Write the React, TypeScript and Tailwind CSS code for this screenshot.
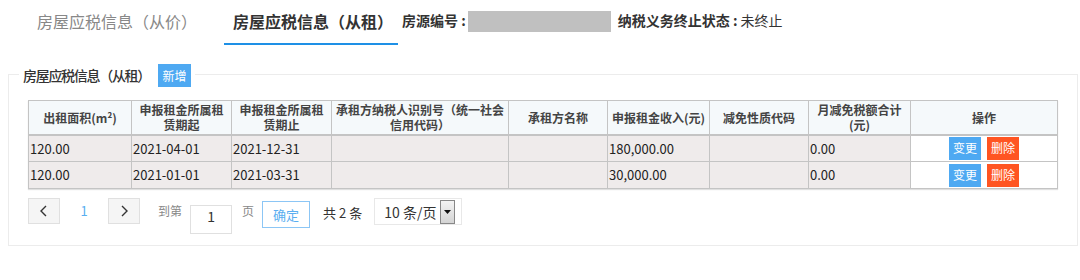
import { useState } from 'react';

const FONT = { fontFamily: '"Noto Sans CJK SC", "Liberation Sans", sans-serif' };

interface RentRow {
  area: string;
  start: string;
  end: string;
  taxId: string;
  name: string;
  income: string;
  code: string;
  relief: string;
}

const rows: RentRow[] = [
  { area: '120.00', start: '2021-04-01', end: '2021-12-31', taxId: '', name: '', income: '180,000.00', code: '', relief: '0.00' },
  { area: '120.00', start: '2021-01-01', end: '2021-03-31', taxId: '', name: '', income: '30,000.00', code: '', relief: '0.00' },
];

const headers: { label: React.ReactNode; w: string }[] = [
  { label: <>出租面积(m²)</>, w: 'w-[103px]' },
  { label: <>申报租金所属租<br />赁期起</>, w: 'w-[100px]' },
  { label: <>申报租金所属租<br />赁期止</>, w: 'w-[100px]' },
  { label: <>承租方纳税人识别号（统一社会<br />信用代码）</>, w: 'w-[177px]' },
  { label: <>承租方名称</>, w: 'w-[99px]' },
  { label: <>申报租金收入(元)</>, w: 'w-[102px]' },
  { label: <>减免性质代码</>, w: 'w-[99px]' },
  { label: <>月减免税额合计<br />(元)</>, w: 'w-[102px]' },
  { label: <>操作</>, w: 'w-[147px]' },
];

export default function App() {
  const [page, setPage] = useState('1');

  return (
    <div className="w-[1080px] h-[280px] bg-white text-[#333] overflow-hidden" style={FONT}>
      {/* ── TABS ── */}
      <div className="flex items-end h-[45px] pl-[37px]">
        <div className="h-[45px] flex items-start pt-[9px] text-[16px] text-[#888] w-[187px]">房屋应税信息（从价）</div>
        <div className="h-[45px] flex flex-col">
          <div className="flex-1 flex items-start pt-[9px] px-[9px] text-[16px] font-bold text-[#333]">房屋应税信息（从租）</div>
          <div className="h-[2px] w-[174px] bg-[#1e90e6]" />
        </div>
        <div className="h-[45px] flex items-start pt-[10px] text-[14px]">
          <span className="font-bold">房源编号 :</span>
          <span className="inline-block w-[143px] h-[21px] bg-[#c0c0c0] ml-[2px] mt-[1px]" />
          <span className="font-bold ml-[7px]">纳税义务终止状态 :</span>
          <span className="ml-[3px]">未终止</span>
        </div>
      </div>

      {/* ── PANEL ── */}
      <div className="relative mt-[29px] ml-[8px] w-[1070px] h-[172px] border border-[#ececec]">
        <div className="absolute left-[10px] top-[-11px] flex items-center bg-white px-[4px]">
          <span className="text-[14px] font-medium text-[#333] tracking-[-1.3px]">房屋应税信息（从租）</span>
          <span className="ml-[8px] w-[33px] h-[23px] bg-[#4ea9f2] text-white text-[12px] flex items-center justify-center">新增</span>
        </div>

        <div className="pt-[25px] pl-[19px]">
          <table className="border-collapse table-fixed w-[1030px] shadow-[0_1px_1px_rgba(0,0,0,0.12)]">
            <thead>
              <tr className="h-[34px] bg-[#f5f9fb] border-b-2 border-[#c4c4c4]">
                {headers.map((h, i) => (
                  <th key={i} className={`${h.w} border border-[#c4c4c4] text-[12px] font-bold text-[#444] leading-[15px] text-center align-middle p-0`}>
                    {h.label}
                  </th>
                ))}
              </tr>
            </thead>
            <tbody>
              {rows.map((r, i) => (
                <tr key={i} className="h-[27px]">
                  {[r.area, r.start, r.end, r.taxId, r.name, r.income, r.code, r.relief].map((v, j) => (
                    <td key={j} className="border border-[#c4c4c4] bg-[#efebeb] text-left px-[1px] text-[13px] text-[#222]">
                      {v}
                    </td>
                  ))}
                  <td className="border border-[#c4c4c4] bg-white">
                    <div className="flex justify-center gap-[6px]">
                      <span className="w-[32px] h-[23px] bg-[#4ea9f2] text-white text-[12px] flex items-center justify-center">变更</span>
                      <span className="w-[32px] h-[23px] bg-[#ff5522] text-white text-[12px] flex items-center justify-center">删除</span>
                    </div>
                  </td>
                </tr>
              ))}
            </tbody>
          </table>

          {/* ── PAGINATION ── */}
          <div className="flex items-start mt-[9px] text-[12px]">
            <button className="w-[32px] h-[26px] border border-[#e0e0e0] bg-[#f5f5f5] flex items-center justify-center">
              <svg width="10" height="12" viewBox="0 0 10 12"><path d="M7 1 L2 6 L7 11" fill="none" stroke="#333" strokeWidth="1.4" /></svg>
            </button>
            <span className="w-[48px] h-[26px] flex items-center justify-center text-[#5aaef0] text-[13px]">1</span>
            <button className="w-[32px] h-[26px] border border-[#e0e0e0] bg-[#f5f5f5] flex items-center justify-center">
              <svg width="10" height="12" viewBox="0 0 10 12"><path d="M3 1 L8 6 L3 11" fill="none" stroke="#333" strokeWidth="1.4" /></svg>
            </button>
            <span className="ml-[18px] h-[26px] flex items-center text-[#888]">到第</span>
            <input
              value={page}
              onChange={(e) => setPage(e.target.value)}
              className="ml-[8px] mt-[7px] w-[42px] h-[29px] border border-[#e0e0e0] text-center text-[14px] text-[#333] pb-[8px] outline-none"
            />
            <span className="ml-[10px] h-[26px] flex items-center text-[#888]">页</span>
            <button className="ml-[8px] mt-[3px] w-[48px] h-[27px] border border-[#8cc6f5] text-[#5aaef0] text-[13px] flex items-center justify-center">确定</button>
            <span className="ml-[13px] h-[30px] flex items-center gap-[3px] text-[13px] text-[#333]">
              <span>共</span><span>2</span><span>条</span>
            </span>
            <div className="ml-[12px] w-[88px] h-[27px] border border-[#e8e8e8] flex items-center pl-[9px]">
              <span className="text-[14px] text-[#333] mt-[2px]">10 条/页</span>
              <span className="ml-auto mr-[6px] w-[15px] h-[24px] border border-[#888] bg-gradient-to-b from-[#f4f4f4] to-[#d4d4d4] flex items-center justify-center">
                <svg width="7" height="4" viewBox="0 0 7 4"><path d="M0 0 L7 0 L3.5 4 Z" fill="#111" /></svg>
              </span>
            </div>
          </div>
        </div>
      </div>
    </div>
  );
}
